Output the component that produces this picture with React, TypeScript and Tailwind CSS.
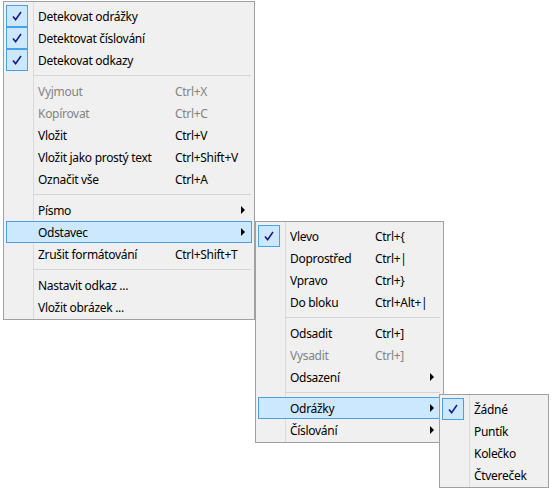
import React from "react";

type Item =
  | { sep: true }
  | {
      sep?: false;
      label: string;
      shortcut?: string;
      checked?: boolean;
      disabled?: boolean;
      arrow?: boolean;
      active?: boolean;
    };

function Check() {
  return (
    <svg width="12" height="12" viewBox="0 0 12 12" className="block">
      <path d="M2 6.5 L4.6 9.6 L10 2" fill="none" stroke="#1a1a8e" strokeWidth="1.6" strokeLinejoin="miter" />
    </svg>
  );
}

function Arrow() {
  return (
    <svg width="5" height="8" viewBox="0 0 5 8" className="block">
      <path d="M0 0 L4 4 L0 8 Z" fill="#000" />
    </svg>
  );
}

function Menu({ items, labelWidth, className }: { items: Item[]; labelWidth: number; className: string }) {
  return (
    <div className={`bg-[#f0f0f0] border border-[#a0a0a0] pt-[3px] pb-[1px] ${className}`}>
      <div className="absolute left-[29px] top-0 bottom-0 w-px bg-[#dadada]" />
      {items.map((it, i) =>
        it.sep ? (
          <div key={i} className="relative h-[9px] flex items-center pl-[29px] pr-[3px]">
            <div className="h-px w-full bg-[#d4d4d4]" />
          </div>
        ) : (
          <div
            key={i}
            className={`relative mx-[2px] h-[22px] flex items-center border ${
              it.active ? "bg-[#cce8ff] border-[#4aa0e6]" : "border-transparent"
            } ${it.disabled ? "text-[#838383]" : "text-black"}`}
          >
            <div
              className={`w-[22px] h-[22px] -m-px flex items-center justify-center shrink-0 ${
                it.checked ? "bg-[#cce8ff] border border-[#4aa0e6]" : ""
              }`}
            >
              {it.checked && <Check />}
            </div>
            <span className="ml-[11px] pt-px whitespace-nowrap shrink-0" style={{ width: labelWidth }}>
              {it.label}
            </span>
            {it.shortcut && <span className="pt-px whitespace-nowrap">{it.shortcut}</span>}
            {it.arrow && (
              <span className="ml-auto mr-[5px]">
                <Arrow />
              </span>
            )}
          </div>
        )
      )}
    </div>
  );
}

const mainItems: Item[] = [
  { label: "Detekovat odrážky", checked: true },
  { label: "Detektovat číslování", checked: true },
  { label: "Detekovat odkazy", checked: true },
  { sep: true },
  { label: "Vyjmout", shortcut: "Ctrl+X", disabled: true },
  { label: "Kopírovat", shortcut: "Ctrl+C", disabled: true },
  { label: "Vložit", shortcut: "Ctrl+V" },
  { label: "Vložit jako prostý text", shortcut: "Ctrl+Shift+V" },
  { label: "Označit vše", shortcut: "Ctrl+A" },
  { sep: true },
  { label: "Písmo", arrow: true },
  { label: "Odstavec", arrow: true, active: true },
  { label: "Zrušit formátování", shortcut: "Ctrl+Shift+T" },
  { sep: true },
  { label: "Nastavit odkaz ..." },
  { label: "Vložit obrázek ..." },
];

const paraItems: Item[] = [
  { label: "Vlevo", shortcut: "Ctrl+{", checked: true },
  { label: "Doprostřed", shortcut: "Ctrl+|" },
  { label: "Vpravo", shortcut: "Ctrl+}" },
  { label: "Do bloku", shortcut: "Ctrl+Alt+|" },
  { sep: true },
  { label: "Odsadit", shortcut: "Ctrl+]" },
  { label: "Vysadit", shortcut: "Ctrl+]", disabled: true },
  { label: "Odsazení", arrow: true },
  { sep: true },
  { label: "Odrážky", arrow: true, active: true },
  { label: "Číslování", arrow: true },
];

const bulletItems: Item[] = [
  { label: "Žádné", checked: true },
  { label: "Puntík" },
  { label: "Kolečko" },
  { label: "Čtvereček" },
];

export default function App() {
  return (
    <div className="relative w-[552px] h-[490px] bg-white overflow-hidden font-['Noto_Sans',sans-serif] text-[12px] tracking-[-0.3px] leading-none">
      <Menu items={mainItems} labelWidth={137} className="relative ml-[3px] mt-px w-[252px]" />
      <Menu items={paraItems} labelWidth={85} className="absolute left-[255px] top-[221px] w-[189px]" />
      <Menu items={bulletItems} labelWidth={60} className="absolute left-[439px] top-[394px] w-[110px]" />
    </div>
  );
}
